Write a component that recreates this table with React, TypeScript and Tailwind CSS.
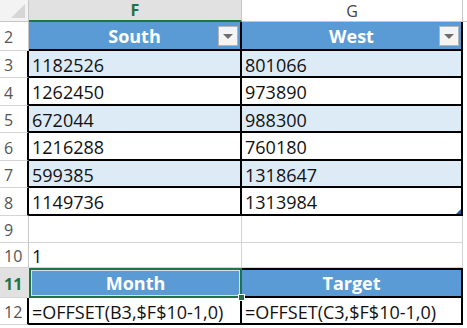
import React from "react";

type Row = {
  n: number;
  h: string;
  f: string;
  g: string;
  kind: "head" | "band" | "plain" | "empty" | "sel" | "formula";
};

const rows: Row[] = [
  { n: 2, h: "h-[29px]", f: "South", g: "West", kind: "head" },
  { n: 3, h: "h-[27px]", f: "1182526", g: "801066", kind: "band" },
  { n: 4, h: "h-[28px]", f: "1262450", g: "973890", kind: "plain" },
  { n: 5, h: "h-[27px]", f: "672044", g: "988300", kind: "band" },
  { n: 6, h: "h-[28px]", f: "1216288", g: "760180", kind: "plain" },
  { n: 7, h: "h-[27px]", f: "599385", g: "1318647", kind: "band" },
  { n: 8, h: "h-[28px]", f: "1149736", g: "1313984", kind: "plain" },
  { n: 9, h: "h-[27px]", f: "", g: "", kind: "empty" },
  { n: 10, h: "h-[25px]", f: "1", g: "", kind: "empty" },
  { n: 11, h: "h-[30px]", f: "Month", g: "Target", kind: "sel" },
  { n: 12, h: "h-[27px]", f: "=OFFSET(B3,$F$10-1,0)", g: "=OFFSET(C3,$F$10-1,0)", kind: "formula" },
];

function Dropdown() {
  return (
    <div className="absolute right-[2px] top-[4px] flex h-[20px] w-[20px] items-center justify-center border border-[#b4b4b4] bg-[#f4f4f4]">
      <div className="h-0 w-0 border-x-[5px] border-t-[5px] border-x-transparent border-t-[#6e6e6e]" />
    </div>
  );
}

function DataCell({ row, col }: { row: Row; col: "f" | "g" }) {
  const text = row[col];
  const base = "relative flex items-center text-[18px] leading-none";
  const w = col === "f" ? "w-[213px]" : "w-[221px]";
  if (row.kind === "head") {
    return (
      <div className={`${base} ${w} justify-center border-b-2 border-r-2 border-black bg-[#5b9bd5] font-bold text-white`}>
        {text}
        <Dropdown />
      </div>
    );
  }
  if (row.kind === "band" || row.kind === "plain") {
    const bg = row.kind === "band" ? "bg-[#ddebf7]" : "bg-white";
    return (
      <div className={`${base} ${w} ${bg} border-b-2 border-r-2 border-black pl-[3px] pt-[2px] text-[#111]`}>
        {text}
        {row.n === 8 && col === "g" && (
          <div className="absolute bottom-0 right-0 h-0 w-0 border-b-[5px] border-l-[5px] border-b-[#2f5597] border-l-transparent" />
        )}
      </div>
    );
  }
  if (row.kind === "sel") {
    if (col === "f") {
      return (
        <div className={`${base} ${w} justify-center border-2 border-[#217346] bg-[#5b9bd5] font-bold text-white`}>
          <div className="pointer-events-none absolute inset-0 border border-white/70" />
          {text}
          <div className="absolute -bottom-[5px] -right-[5px] z-10 h-[7px] w-[7px] border border-white bg-[#217346]" />
        </div>
      );
    }
    return (
      <div className={`${base} ${w} justify-center border-y-2 border-r-2 border-black bg-[#5b9bd5] font-bold text-white`}>
        {text}
      </div>
    );
  }
  if (row.kind === "formula") {
    return (
      <div className={`${base} ${w} border-b-2 border-r-2 border-black bg-white pl-[3px] pt-[2px] text-[#111]`}>
        {text}
      </div>
    );
  }
  return (
    <div className={`${base} ${w} border-b border-r border-[#d4d4d4] bg-white pl-[3px] pt-[2px] text-[#111]`}>
      {text}
    </div>
  );
}

export default function App() {
  return (
    <main className="h-[328px] w-[467px] overflow-hidden bg-white font-['Open_Sans',sans-serif]">
      {/* column letters */}
      <div className="flex h-[22px]">
        <div className="relative w-[29px] border-b border-r border-[#c6c6c6] bg-[#f3f3f3]">
          <div className="absolute bottom-[3px] right-[3px] h-0 w-0 border-b-[14px] border-l-[14px] border-b-[#d6d6d6] border-l-transparent" />
        </div>
        <div className="flex w-[213px] items-center justify-center border-b-2 border-r border-[#217346] border-r-[#c6c6c6] bg-[#e1e1e1] text-[16px] font-bold text-[#217346]">
          F
        </div>
        <div className="flex w-[221px] items-center justify-center border-b border-r border-[#c6c6c6] bg-white text-[16px] text-[#444]">
          G
        </div>
        <div className="flex-1 border-b border-[#c6c6c6] bg-white" />
      </div>

      {rows.map((row) => {
        const darkEdge = row.kind === "band" || row.kind === "plain" || row.kind === "formula";
        const sel = row.kind === "sel";
        return (
          <div key={row.n} className={`flex ${row.h}`}>
            <div
              className={`flex w-[29px] items-center pl-[4px] pt-[2px] text-[16px] leading-none ${
                sel ? "bg-[#e1e1e1] font-bold text-[#217346]" : "bg-white text-[#555]"
              } border-b border-[#d4d4d4] ${
                sel ? "border-r-0" : darkEdge ? "border-r-2 border-r-black" : "border-r border-r-[#c6c6c6]"
              }`}
            >
              {row.n}
            </div>
            <DataCell row={row} col="f" />
            <DataCell row={row} col="g" />
            <div className="flex-1 bg-white" />
          </div>
        );
      })}
    </main>
  );
}
